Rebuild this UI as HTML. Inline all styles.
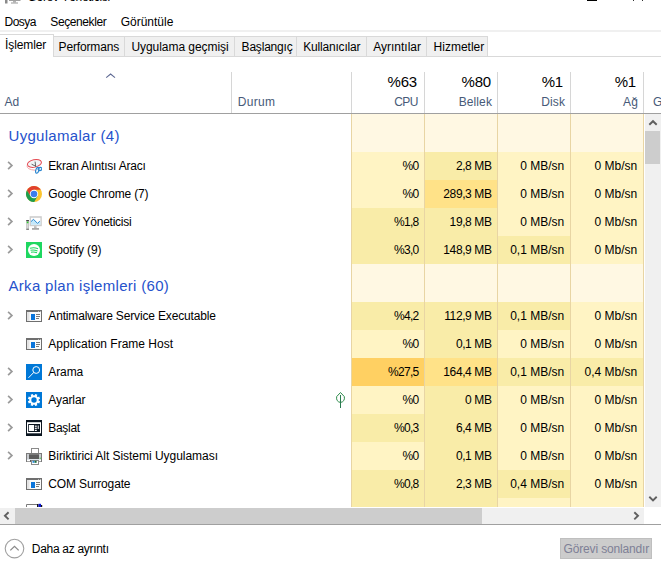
<!DOCTYPE html>
<html><head><meta charset="utf-8"><style>
html,body{margin:0;padding:0;}
body{width:661px;height:561px;overflow:hidden;background:#fff;position:relative;font-family:"Liberation Sans", sans-serif;}
.t{position:absolute;white-space:nowrap;}
.r{position:absolute;display:block;}
</style></head><body>
<svg class="r" style="left:4px;top:0px" width="17" height="5" viewBox="0 0 17 5"><rect x="1" y="0" width="2.5" height="3.5" fill="#8a8a8a"/><rect x="5" y="0" width="11.5" height="1" fill="#a0a0a0"/><rect x="9" y="1" width="3" height="1.5" fill="#b4b4b4"/><rect x="7" y="2.5" width="7" height="1" fill="#9a9a9a"/></svg>
<div class="t" style="left:27.5px;top:-9.36px;font-size:12px;line-height:12px;color:#000;letter-spacing:-0.3px;">Görev Yöneticisi</div>
<div class="r" style="left:587px;top:0px;width:10px;height:1px;background:#000;"></div>
<div class="r" style="left:633px;top:0px;width:1px;height:1px;background:#333;"></div>
<div class="r" style="left:642px;top:0px;width:1px;height:1px;background:#333;"></div>
<div class="t" style="left:4.5px;top:15.84px;font-size:12px;line-height:12px;color:#000;letter-spacing:-0.5px;">Dosya</div>
<div class="t" style="left:50.3px;top:15.84px;font-size:12px;line-height:12px;color:#000;letter-spacing:-0.4px;">Seçenekler</div>
<div class="t" style="left:120.7px;top:15.84px;font-size:12px;line-height:12px;color:#000;letter-spacing:0px;">Görüntüle</div>
<div class="r" style="left:0px;top:30px;width:661px;height:2px;background:#f0f0f0;"></div>
<div class="r" style="left:0px;top:56px;width:661px;height:1px;background:#d9d9d9;"></div>
<div class="r" style="left:53px;top:36px;width:72px;height:21px;background:#d9d9d9;"></div>
<div class="r" style="left:54px;top:37px;width:70px;height:19px;background:#f0f0f0;"></div>
<div class="t" style="left:58.6px;top:40.84px;font-size:12px;line-height:12px;color:#000;letter-spacing:-0.15px;">Performans</div>
<div class="r" style="left:124px;top:36px;width:111px;height:21px;background:#d9d9d9;"></div>
<div class="r" style="left:125px;top:37px;width:109px;height:19px;background:#f0f0f0;"></div>
<div class="t" style="left:131.4px;top:40.84px;font-size:12px;line-height:12px;color:#000;letter-spacing:-0.05px;">Uygulama geçmişi</div>
<div class="r" style="left:234px;top:36px;width:63px;height:21px;background:#d9d9d9;"></div>
<div class="r" style="left:235px;top:37px;width:61px;height:19px;background:#f0f0f0;"></div>
<div class="t" style="left:241.6px;top:40.84px;font-size:12px;line-height:12px;color:#000;letter-spacing:-0.2px;">Başlangıç</div>
<div class="r" style="left:296px;top:36px;width:71px;height:21px;background:#d9d9d9;"></div>
<div class="r" style="left:297px;top:37px;width:69px;height:19px;background:#f0f0f0;"></div>
<div class="t" style="left:303.3px;top:40.84px;font-size:12px;line-height:12px;color:#000;letter-spacing:-0.2px;">Kullanıcılar</div>
<div class="r" style="left:366px;top:36px;width:61px;height:21px;background:#d9d9d9;"></div>
<div class="r" style="left:367px;top:37px;width:59px;height:19px;background:#f0f0f0;"></div>
<div class="t" style="left:373.2px;top:40.84px;font-size:12px;line-height:12px;color:#000;letter-spacing:0px;">Ayrıntılar</div>
<div class="r" style="left:426px;top:36px;width:62px;height:21px;background:#d9d9d9;"></div>
<div class="r" style="left:427px;top:37px;width:60px;height:19px;background:#f0f0f0;"></div>
<div class="t" style="left:433.6px;top:40.84px;font-size:12px;line-height:12px;color:#000;letter-spacing:0px;">Hizmetler</div>
<div class="r" style="left:0px;top:34px;width:54px;height:23px;background:#d9d9d9;"></div>
<div class="r" style="left:0px;top:35px;width:53px;height:22px;background:#fff;"></div>
<div class="t" style="left:5px;top:38.84px;font-size:12px;line-height:12px;color:#000;letter-spacing:-0.1px;">İşlemler</div>
<div class="r" style="left:231px;top:72px;width:1px;height:41px;background:#d6d6d6;"></div>
<div class="r" style="left:351px;top:72px;width:1px;height:41px;background:#d6d6d6;"></div>
<div class="r" style="left:424px;top:72px;width:1px;height:41px;background:#d6d6d6;"></div>
<div class="r" style="left:497px;top:72px;width:1px;height:41px;background:#d6d6d6;"></div>
<div class="r" style="left:570px;top:72px;width:1px;height:41px;background:#d6d6d6;"></div>
<div class="r" style="left:643px;top:72px;width:1px;height:41px;background:#d6d6d6;"></div>
<div class="r" style="left:0px;top:113px;width:661px;height:1px;background:#a0a0a0;"></div>
<svg class="r" style="left:105px;top:72px" width="11" height="7" viewBox="0 0 11 7"><path d="M1.2 5.6 L5.6 2.1 L10 5.6" fill="none" stroke="#5f6a94" stroke-width="1.15"/></svg>
<div class="t" style="left:4.4px;top:95.54px;font-size:12px;line-height:12px;color:#475a78;letter-spacing:0px;">Ad</div>
<div class="t" style="left:237.8px;top:95.54px;font-size:12px;line-height:12px;color:#475a78;letter-spacing:0.3px;">Durum</div>
<div class="t" style="right:244px;text-align:right;top:73.60px;font-size:15px;line-height:15px;color:#000;letter-spacing:-0.2px;">%63</div>
<div class="t" style="right:243px;text-align:right;top:95.54px;font-size:12px;line-height:12px;color:#475a78;letter-spacing:-0.5px;">CPU</div>
<div class="t" style="right:170px;text-align:right;top:73.60px;font-size:15px;line-height:15px;color:#000;letter-spacing:-0.2px;">%80</div>
<div class="t" style="right:169px;text-align:right;top:95.54px;font-size:12px;line-height:12px;color:#475a78;letter-spacing:0.1px;">Bellek</div>
<div class="t" style="right:98px;text-align:right;top:73.60px;font-size:15px;line-height:15px;color:#000;letter-spacing:-0.2px;">%1</div>
<div class="t" style="right:96px;text-align:right;top:95.54px;font-size:12px;line-height:12px;color:#475a78;letter-spacing:0.1px;">Disk</div>
<div class="t" style="right:25px;text-align:right;top:73.60px;font-size:15px;line-height:15px;color:#000;letter-spacing:-0.2px;">%1</div>
<div class="t" style="right:23px;text-align:right;top:95.54px;font-size:12px;line-height:12px;color:#475a78;letter-spacing:0.1px;">Ağ</div>
<div class="t" style="left:653px;top:95.54px;font-size:12px;line-height:12px;color:#475a78;letter-spacing:0px;">G</div>
<div class="r" style="left:352px;top:114px;width:72px;height:38px;background:#fff8e3;"></div>
<div class="r" style="left:425px;top:114px;width:72px;height:38px;background:#fff8e3;"></div>
<div class="r" style="left:498px;top:114px;width:72px;height:38px;background:#fff8e3;"></div>
<div class="r" style="left:571px;top:114px;width:72px;height:38px;background:#fff8e3;"></div>
<div class="t" style="left:8.5px;top:128.30px;font-size:15px;line-height:15px;color:#2652cc;letter-spacing:0.3px;">Uygulamalar (4)</div>
<div class="r" style="left:352px;top:152px;width:72px;height:28px;background:#fff4c4;"></div>
<div class="r" style="left:425px;top:152px;width:72px;height:28px;background:#f9eca8;"></div>
<div class="r" style="left:498px;top:152px;width:72px;height:28px;background:#fff4c4;"></div>
<div class="r" style="left:571px;top:152px;width:72px;height:28px;background:#fff4c4;"></div>
<svg class="r" style="left:7px;top:161px" width="7" height="10" viewBox="0 0 7 10"><path d="M1.1 0.8 L4.9 4.4 L1.1 8.1" fill="none" stroke="#9a9a9a" stroke-width="1.7"/></svg>
<svg class="r" style="left:26px;top:158px" width="16" height="16" viewBox="0 0 16 16"><ellipse cx="8.4" cy="5.4" rx="7.1" ry="3.8" transform="rotate(-12 8.4 5.4)" fill="#f1f4f6" stroke="#e64a52" stroke-width="1"/><path d="M1 7.6 Q0.6 11.6 9.6 12.3" fill="none" stroke="#f3a9ac" stroke-width="1"/><path d="M5.6 6.2 L10 8.4 M9.1 3.6 L9.7 8.6" stroke="#555" stroke-width="0.9" fill="none"/><ellipse cx="11.3" cy="12.3" rx="1.5" ry="3" transform="rotate(15 11.3 12.3)" fill="none" stroke="#2a86d0" stroke-width="1.2"/><ellipse cx="14" cy="11" rx="1.9" ry="1.5" transform="rotate(-20 14 11)" fill="none" stroke="#2a86d0" stroke-width="1.2"/></svg>
<div class="t" style="left:48.3px;top:160.34px;font-size:12px;line-height:12px;color:#000;letter-spacing:-0.2px;">Ekran Alıntısı Aracı</div>
<div class="t" style="right:242.5px;text-align:right;top:160.34px;font-size:12px;line-height:12px;color:#000;letter-spacing:-0.7px;">%0</div>
<div class="t" style="right:169.5px;text-align:right;top:160.34px;font-size:12px;line-height:12px;color:#000;letter-spacing:-0.4px;">2,8 MB</div>
<div class="t" style="right:96.79999999999995px;text-align:right;top:160.34px;font-size:12px;line-height:12px;color:#000;letter-spacing:0px;">0 MB/sn</div>
<div class="t" style="right:23.799999999999955px;text-align:right;top:160.34px;font-size:12px;line-height:12px;color:#000;letter-spacing:0px;">0 Mb/sn</div>
<div class="r" style="left:352px;top:180px;width:72px;height:28px;background:#fff4c4;"></div>
<div class="r" style="left:425px;top:180px;width:72px;height:28px;background:#ffe288;"></div>
<div class="r" style="left:498px;top:180px;width:72px;height:28px;background:#fff4c4;"></div>
<div class="r" style="left:571px;top:180px;width:72px;height:28px;background:#fff4c4;"></div>
<svg class="r" style="left:7px;top:189px" width="7" height="10" viewBox="0 0 7 10"><path d="M1.1 0.8 L4.9 4.4 L1.1 8.1" fill="none" stroke="#9a9a9a" stroke-width="1.7"/></svg>
<svg class="r" style="left:26px;top:186px" width="16" height="16" viewBox="0 0 16 16"><circle cx="8" cy="8" r="8" fill="#fcc52f"/><path d="M14.8 3.8 A8 8 0 0 0 0.96 4.2 L4.36 10.1 L8 3.8 Z" fill="#e0402f"/><path d="M0.96 4.2 A8 8 0 0 0 8.24 16 L11.64 10.1 L4.36 10.1 Z" fill="#1f9d4e"/><circle cx="8" cy="8" r="4.2" fill="#fff"/><circle cx="8" cy="8" r="3.3" fill="#3b7ded"/></svg>
<div class="t" style="left:48.3px;top:188.34px;font-size:12px;line-height:12px;color:#000;letter-spacing:-0.15px;">Google Chrome (7)</div>
<div class="t" style="right:242.5px;text-align:right;top:188.34px;font-size:12px;line-height:12px;color:#000;letter-spacing:-0.7px;">%0</div>
<div class="t" style="right:169.5px;text-align:right;top:188.34px;font-size:12px;line-height:12px;color:#000;letter-spacing:-0.4px;">289,3 MB</div>
<div class="t" style="right:96.79999999999995px;text-align:right;top:188.34px;font-size:12px;line-height:12px;color:#000;letter-spacing:0px;">0 MB/sn</div>
<div class="t" style="right:23.799999999999955px;text-align:right;top:188.34px;font-size:12px;line-height:12px;color:#000;letter-spacing:0px;">0 Mb/sn</div>
<div class="r" style="left:352px;top:208px;width:72px;height:28px;background:#f9eca8;"></div>
<div class="r" style="left:425px;top:208px;width:72px;height:28px;background:#f9eca8;"></div>
<div class="r" style="left:498px;top:208px;width:72px;height:28px;background:#fff4c4;"></div>
<div class="r" style="left:571px;top:208px;width:72px;height:28px;background:#fff4c4;"></div>
<svg class="r" style="left:7px;top:217px" width="7" height="10" viewBox="0 0 7 10"><path d="M1.1 0.8 L4.9 4.4 L1.1 8.1" fill="none" stroke="#9a9a9a" stroke-width="1.7"/></svg>
<svg class="r" style="left:26px;top:212px" width="16" height="18" viewBox="0 0 16 18"><rect x="0.3" y="8" width="2.6" height="9.8" fill="#b4b4b4"/><rect x="0.8" y="9.5" width="1.6" height="7" fill="#d8d8d8"/><rect x="0.3" y="8" width="2.6" height="1.2" fill="#444"/><circle cx="1.6" cy="10.4" r="0.9" fill="#30d030"/><rect x="0.3" y="16.8" width="2.6" height="1" fill="#777"/><rect x="3.6" y="4.2" width="12.2" height="10" fill="#cdcdcd"/><rect x="5" y="5.8" width="9.4" height="7" fill="#fff"/><path d="M5 9.6 L7.5 7.3 L11.5 11.4 L14.4 9 L14.4 12.8 L5 12.8 Z" fill="#c4e8fa"/><path d="M5 9.6 L7.5 7.3 L11.5 11.4 L13.8 9.2" fill="none" stroke="#2a88d0" stroke-width="1"/><rect x="8" y="14.2" width="2.6" height="1.8" fill="#bdbdbd"/><rect x="6" y="16" width="7" height="1.8" fill="#a8a8a8"/></svg>
<div class="t" style="left:48.3px;top:216.34px;font-size:12px;line-height:12px;color:#000;letter-spacing:-0.25px;">Görev Yöneticisi</div>
<div class="t" style="right:242.5px;text-align:right;top:216.34px;font-size:12px;line-height:12px;color:#000;letter-spacing:-0.7px;">%1,8</div>
<div class="t" style="right:169.5px;text-align:right;top:216.34px;font-size:12px;line-height:12px;color:#000;letter-spacing:-0.4px;">19,8 MB</div>
<div class="t" style="right:96.79999999999995px;text-align:right;top:216.34px;font-size:12px;line-height:12px;color:#000;letter-spacing:0px;">0 MB/sn</div>
<div class="t" style="right:23.799999999999955px;text-align:right;top:216.34px;font-size:12px;line-height:12px;color:#000;letter-spacing:0px;">0 Mb/sn</div>
<div class="r" style="left:352px;top:236px;width:72px;height:28px;background:#f9eca8;"></div>
<div class="r" style="left:425px;top:236px;width:72px;height:28px;background:#f9eca8;"></div>
<div class="r" style="left:498px;top:236px;width:72px;height:28px;background:#f9eca8;"></div>
<div class="r" style="left:571px;top:236px;width:72px;height:28px;background:#fff4c4;"></div>
<svg class="r" style="left:7px;top:245px" width="7" height="10" viewBox="0 0 7 10"><path d="M1.1 0.8 L4.9 4.4 L1.1 8.1" fill="none" stroke="#9a9a9a" stroke-width="1.7"/></svg>
<svg class="r" style="left:26px;top:242px" width="16" height="16" viewBox="0 0 16 16"><rect x="0" y="0" width="16" height="16" fill="#1ed760"/><circle cx="8" cy="8" r="6" fill="#fff"/><path d="M4 6.3 Q8 5 12 6.8 M4.5 8.3 Q8 7.3 11.5 9 M5 10.2 Q8 9.5 11 10.8" fill="none" stroke="#1ed760" stroke-width="1.1"/></svg>
<div class="t" style="left:48.3px;top:244.34px;font-size:12px;line-height:12px;color:#000;letter-spacing:-0.15px;">Spotify (9)</div>
<div class="t" style="right:242.5px;text-align:right;top:244.34px;font-size:12px;line-height:12px;color:#000;letter-spacing:-0.7px;">%3,0</div>
<div class="t" style="right:169.5px;text-align:right;top:244.34px;font-size:12px;line-height:12px;color:#000;letter-spacing:-0.4px;">148,9 MB</div>
<div class="t" style="right:96.79999999999995px;text-align:right;top:244.34px;font-size:12px;line-height:12px;color:#000;letter-spacing:0px;">0,1 MB/sn</div>
<div class="t" style="right:23.799999999999955px;text-align:right;top:244.34px;font-size:12px;line-height:12px;color:#000;letter-spacing:0px;">0 Mb/sn</div>
<div class="r" style="left:352px;top:264px;width:72px;height:38px;background:#fff8e3;"></div>
<div class="r" style="left:425px;top:264px;width:72px;height:38px;background:#fff8e3;"></div>
<div class="r" style="left:498px;top:264px;width:72px;height:38px;background:#fff8e3;"></div>
<div class="r" style="left:571px;top:264px;width:72px;height:38px;background:#fff8e3;"></div>
<div class="t" style="left:8.5px;top:278.30px;font-size:15px;line-height:15px;color:#2652cc;letter-spacing:0.3px;">Arka plan işlemleri (60)</div>
<div class="r" style="left:352px;top:302px;width:72px;height:28px;background:#f9eca8;"></div>
<div class="r" style="left:425px;top:302px;width:72px;height:28px;background:#f9eca8;"></div>
<div class="r" style="left:498px;top:302px;width:72px;height:28px;background:#f9eca8;"></div>
<div class="r" style="left:571px;top:302px;width:72px;height:28px;background:#fff4c4;"></div>
<svg class="r" style="left:7px;top:311px" width="7" height="10" viewBox="0 0 7 10"><path d="M1.1 0.8 L4.9 4.4 L1.1 8.1" fill="none" stroke="#9a9a9a" stroke-width="1.7"/></svg>
<svg class="r" style="left:26px;top:310px" width="16" height="12" viewBox="0 0 16 12"><rect x="0" y="0" width="16" height="12" fill="#6f6f6f"/><rect x="1" y="2" width="14" height="9" fill="#fbfbfb"/><rect x="12" y="1" width="1" height="1" fill="#b8b8b8"/><rect x="14" y="1" width="1" height="1" fill="#b8b8b8"/><rect x="1" y="2" width="2.5" height="9" fill="#e3e3e3"/><rect x="5" y="4" width="4" height="6" fill="#0a74da"/><rect x="10" y="4" width="4" height="1" fill="#7a7a7a"/><rect x="10" y="6" width="4" height="1" fill="#7a7a7a"/><rect x="10" y="8" width="3" height="1" fill="#7a7a7a"/></svg>
<div class="t" style="left:48.3px;top:310.34px;font-size:12px;line-height:12px;color:#000;letter-spacing:-0.15px;">Antimalware Service Executable</div>
<div class="t" style="right:242.5px;text-align:right;top:310.34px;font-size:12px;line-height:12px;color:#000;letter-spacing:-0.7px;">%4,2</div>
<div class="t" style="right:169.5px;text-align:right;top:310.34px;font-size:12px;line-height:12px;color:#000;letter-spacing:-0.4px;">112,9 MB</div>
<div class="t" style="right:96.79999999999995px;text-align:right;top:310.34px;font-size:12px;line-height:12px;color:#000;letter-spacing:0px;">0,1 MB/sn</div>
<div class="t" style="right:23.799999999999955px;text-align:right;top:310.34px;font-size:12px;line-height:12px;color:#000;letter-spacing:0px;">0 Mb/sn</div>
<div class="r" style="left:352px;top:330px;width:72px;height:28px;background:#fff4c4;"></div>
<div class="r" style="left:425px;top:330px;width:72px;height:28px;background:#f9eca8;"></div>
<div class="r" style="left:498px;top:330px;width:72px;height:28px;background:#fff4c4;"></div>
<div class="r" style="left:571px;top:330px;width:72px;height:28px;background:#fff4c4;"></div>
<svg class="r" style="left:26px;top:338px" width="16" height="12" viewBox="0 0 16 12"><rect x="0" y="0" width="16" height="12" fill="#6f6f6f"/><rect x="1" y="2" width="14" height="9" fill="#fbfbfb"/><rect x="12" y="1" width="1" height="1" fill="#b8b8b8"/><rect x="14" y="1" width="1" height="1" fill="#b8b8b8"/><rect x="1" y="2" width="2.5" height="9" fill="#e3e3e3"/><rect x="5" y="4" width="4" height="6" fill="#0a74da"/><rect x="10" y="4" width="4" height="1" fill="#7a7a7a"/><rect x="10" y="6" width="4" height="1" fill="#7a7a7a"/><rect x="10" y="8" width="3" height="1" fill="#7a7a7a"/></svg>
<div class="t" style="left:48.3px;top:338.34px;font-size:12px;line-height:12px;color:#000;letter-spacing:0px;">Application Frame Host</div>
<div class="t" style="right:242.5px;text-align:right;top:338.34px;font-size:12px;line-height:12px;color:#000;letter-spacing:-0.7px;">%0</div>
<div class="t" style="right:169.5px;text-align:right;top:338.34px;font-size:12px;line-height:12px;color:#000;letter-spacing:-0.4px;">0,1 MB</div>
<div class="t" style="right:96.79999999999995px;text-align:right;top:338.34px;font-size:12px;line-height:12px;color:#000;letter-spacing:0px;">0 MB/sn</div>
<div class="t" style="right:23.799999999999955px;text-align:right;top:338.34px;font-size:12px;line-height:12px;color:#000;letter-spacing:0px;">0 Mb/sn</div>
<div class="r" style="left:352px;top:358px;width:72px;height:28px;background:#ffd062;"></div>
<div class="r" style="left:425px;top:358px;width:72px;height:28px;background:#ffe288;"></div>
<div class="r" style="left:498px;top:358px;width:72px;height:28px;background:#f9eca8;"></div>
<div class="r" style="left:571px;top:358px;width:72px;height:28px;background:#f9eca8;"></div>
<svg class="r" style="left:7px;top:367px" width="7" height="10" viewBox="0 0 7 10"><path d="M1.1 0.8 L4.9 4.4 L1.1 8.1" fill="none" stroke="#9a9a9a" stroke-width="1.7"/></svg>
<svg class="r" style="left:26px;top:364px" width="16" height="16" viewBox="0 0 16 16"><rect x="0" y="0" width="16" height="16" fill="#0078d7"/><circle cx="10.2" cy="6" r="3.4" fill="none" stroke="#fff" stroke-width="1"/><path d="M7.8 8.4 L2.5 13.8" stroke="#fff" stroke-width="1"/></svg>
<div class="t" style="left:48.3px;top:366.34px;font-size:12px;line-height:12px;color:#000;letter-spacing:-0.1px;">Arama</div>
<div class="t" style="right:242.5px;text-align:right;top:366.34px;font-size:12px;line-height:12px;color:#000;letter-spacing:-0.7px;">%27,5</div>
<div class="t" style="right:169.5px;text-align:right;top:366.34px;font-size:12px;line-height:12px;color:#000;letter-spacing:-0.4px;">164,4 MB</div>
<div class="t" style="right:96.79999999999995px;text-align:right;top:366.34px;font-size:12px;line-height:12px;color:#000;letter-spacing:0px;">0,1 MB/sn</div>
<div class="t" style="right:23.799999999999955px;text-align:right;top:366.34px;font-size:12px;line-height:12px;color:#000;letter-spacing:0px;">0,4 Mb/sn</div>
<div class="r" style="left:352px;top:386px;width:72px;height:28px;background:#fff4c4;"></div>
<div class="r" style="left:425px;top:386px;width:72px;height:28px;background:#f9eca8;"></div>
<div class="r" style="left:498px;top:386px;width:72px;height:28px;background:#fff4c4;"></div>
<div class="r" style="left:571px;top:386px;width:72px;height:28px;background:#fff4c4;"></div>
<svg class="r" style="left:7px;top:395px" width="7" height="10" viewBox="0 0 7 10"><path d="M1.1 0.8 L4.9 4.4 L1.1 8.1" fill="none" stroke="#9a9a9a" stroke-width="1.7"/></svg>
<svg class="r" style="left:26px;top:392px" width="16" height="16" viewBox="0 0 16 16"><rect x="0" y="0" width="16" height="16" fill="#0078d7"/><g transform="translate(8 8)" fill="#fff"><circle r="4.7"/><rect x="-1.2" y="-6.1" width="2.4" height="3" transform="rotate(22.5)"/><rect x="-1.2" y="-6.1" width="2.4" height="3" transform="rotate(67.5)"/><rect x="-1.2" y="-6.1" width="2.4" height="3" transform="rotate(112.5)"/><rect x="-1.2" y="-6.1" width="2.4" height="3" transform="rotate(157.5)"/><rect x="-1.2" y="-6.1" width="2.4" height="3" transform="rotate(202.5)"/><rect x="-1.2" y="-6.1" width="2.4" height="3" transform="rotate(247.5)"/><rect x="-1.2" y="-6.1" width="2.4" height="3" transform="rotate(292.5)"/><rect x="-1.2" y="-6.1" width="2.4" height="3" transform="rotate(337.5)"/></g><circle cx="8" cy="8" r="2.7" fill="#0078d7"/></svg>
<div class="t" style="left:48.3px;top:394.34px;font-size:12px;line-height:12px;color:#000;letter-spacing:-0.1px;">Ayarlar</div>
<div class="t" style="right:242.5px;text-align:right;top:394.34px;font-size:12px;line-height:12px;color:#000;letter-spacing:-0.7px;">%0</div>
<div class="t" style="right:169.5px;text-align:right;top:394.34px;font-size:12px;line-height:12px;color:#000;letter-spacing:-0.4px;">0 MB</div>
<div class="t" style="right:96.79999999999995px;text-align:right;top:394.34px;font-size:12px;line-height:12px;color:#000;letter-spacing:0px;">0 MB/sn</div>
<div class="t" style="right:23.799999999999955px;text-align:right;top:394.34px;font-size:12px;line-height:12px;color:#000;letter-spacing:0px;">0 Mb/sn</div>
<div class="r" style="left:352px;top:414px;width:72px;height:28px;background:#f9eca8;"></div>
<div class="r" style="left:425px;top:414px;width:72px;height:28px;background:#f9eca8;"></div>
<div class="r" style="left:498px;top:414px;width:72px;height:28px;background:#fff4c4;"></div>
<div class="r" style="left:571px;top:414px;width:72px;height:28px;background:#fff4c4;"></div>
<svg class="r" style="left:7px;top:423px" width="7" height="10" viewBox="0 0 7 10"><path d="M1.1 0.8 L4.9 4.4 L1.1 8.1" fill="none" stroke="#9a9a9a" stroke-width="1.7"/></svg>
<svg class="r" style="left:26px;top:420px" width="16" height="16" viewBox="0 0 16 16"><rect x="0" y="0" width="16" height="16" fill="#0b1520"/><rect x="1" y="2.2" width="14" height="11.1" fill="#fff"/><rect x="2.2" y="4" width="11.8" height="8" fill="#0b1520"/><rect x="3" y="5" width="5" height="6" fill="#fff"/><rect x="8.8" y="5.6" width="2" height="1.2" fill="#fff"/><rect x="8.8" y="7.7" width="2" height="1.2" fill="#fff"/><rect x="8.8" y="9.8" width="2" height="1.2" fill="#fff"/><rect x="11.7" y="5.5" width="1" height="3.5" fill="#fff"/></svg>
<div class="t" style="left:48.3px;top:422.34px;font-size:12px;line-height:12px;color:#000;letter-spacing:-0.3px;">Başlat</div>
<div class="t" style="right:242.5px;text-align:right;top:422.34px;font-size:12px;line-height:12px;color:#000;letter-spacing:-0.7px;">%0,3</div>
<div class="t" style="right:169.5px;text-align:right;top:422.34px;font-size:12px;line-height:12px;color:#000;letter-spacing:-0.4px;">6,4 MB</div>
<div class="t" style="right:96.79999999999995px;text-align:right;top:422.34px;font-size:12px;line-height:12px;color:#000;letter-spacing:0px;">0 MB/sn</div>
<div class="t" style="right:23.799999999999955px;text-align:right;top:422.34px;font-size:12px;line-height:12px;color:#000;letter-spacing:0px;">0 Mb/sn</div>
<div class="r" style="left:352px;top:442px;width:72px;height:28px;background:#fff4c4;"></div>
<div class="r" style="left:425px;top:442px;width:72px;height:28px;background:#f9eca8;"></div>
<div class="r" style="left:498px;top:442px;width:72px;height:28px;background:#fff4c4;"></div>
<div class="r" style="left:571px;top:442px;width:72px;height:28px;background:#fff4c4;"></div>
<svg class="r" style="left:7px;top:451px" width="7" height="10" viewBox="0 0 7 10"><path d="M1.1 0.8 L4.9 4.4 L1.1 8.1" fill="none" stroke="#9a9a9a" stroke-width="1.7"/></svg>
<svg class="r" style="left:26px;top:448px" width="16" height="18" viewBox="0 0 16 18"><rect x="5.5" y="0.5" width="7" height="6" fill="#fff" stroke="#8a8a8a"/><rect x="0.5" y="5.5" width="15" height="8" fill="#c9ccd0" stroke="#7a7a7a"/><rect x="3" y="5" width="10" height="6" fill="#5c5c5c"/><rect x="3" y="5" width="10" height="2" fill="#7a7a7a"/><rect x="1" y="11" width="14" height="1" fill="#dfe5ea"/><rect x="1" y="12" width="14" height="1.3" fill="#fff"/><rect x="4.3" y="12" width="1" height="1.6" fill="#111"/><rect x="12" y="12" width="1" height="1.6" fill="#111"/><rect x="5.5" y="12.5" width="7" height="4" fill="#fff" stroke="#8a8a8a"/><rect x="6.5" y="12.8" width="2" height="2" fill="#2a8ad8"/><rect x="8.6" y="12.8" width="2" height="2" fill="#1a6a3a"/><circle cx="14.3" cy="10.3" r="0.8" fill="#60d060"/></svg>
<div class="t" style="left:48.3px;top:450.34px;font-size:12px;line-height:12px;color:#000;letter-spacing:-0.03px;">Biriktirici Alt Sistemi Uygulaması</div>
<div class="t" style="right:242.5px;text-align:right;top:450.34px;font-size:12px;line-height:12px;color:#000;letter-spacing:-0.7px;">%0</div>
<div class="t" style="right:169.5px;text-align:right;top:450.34px;font-size:12px;line-height:12px;color:#000;letter-spacing:-0.4px;">0,1 MB</div>
<div class="t" style="right:96.79999999999995px;text-align:right;top:450.34px;font-size:12px;line-height:12px;color:#000;letter-spacing:0px;">0 MB/sn</div>
<div class="t" style="right:23.799999999999955px;text-align:right;top:450.34px;font-size:12px;line-height:12px;color:#000;letter-spacing:0px;">0 Mb/sn</div>
<div class="r" style="left:352px;top:470px;width:72px;height:28px;background:#f9eca8;"></div>
<div class="r" style="left:425px;top:470px;width:72px;height:28px;background:#f9eca8;"></div>
<div class="r" style="left:498px;top:470px;width:72px;height:28px;background:#f9eca8;"></div>
<div class="r" style="left:571px;top:470px;width:72px;height:28px;background:#fff4c4;"></div>
<svg class="r" style="left:26px;top:478px" width="16" height="12" viewBox="0 0 16 12"><rect x="0" y="0" width="16" height="12" fill="#6f6f6f"/><rect x="1" y="2" width="14" height="9" fill="#fbfbfb"/><rect x="12" y="1" width="1" height="1" fill="#b8b8b8"/><rect x="14" y="1" width="1" height="1" fill="#b8b8b8"/><rect x="1" y="2" width="2.5" height="9" fill="#e3e3e3"/><rect x="5" y="4" width="4" height="6" fill="#0a74da"/><rect x="10" y="4" width="4" height="1" fill="#7a7a7a"/><rect x="10" y="6" width="4" height="1" fill="#7a7a7a"/><rect x="10" y="8" width="3" height="1" fill="#7a7a7a"/></svg>
<div class="t" style="left:48.3px;top:478.34px;font-size:12px;line-height:12px;color:#000;letter-spacing:-0.15px;">COM Surrogate</div>
<div class="t" style="right:242.5px;text-align:right;top:478.34px;font-size:12px;line-height:12px;color:#000;letter-spacing:-0.7px;">%0,8</div>
<div class="t" style="right:169.5px;text-align:right;top:478.34px;font-size:12px;line-height:12px;color:#000;letter-spacing:-0.4px;">2,3 MB</div>
<div class="t" style="right:96.79999999999995px;text-align:right;top:478.34px;font-size:12px;line-height:12px;color:#000;letter-spacing:0px;">0,4 MB/sn</div>
<div class="t" style="right:23.799999999999955px;text-align:right;top:478.34px;font-size:12px;line-height:12px;color:#000;letter-spacing:0px;">0 Mb/sn</div>
<div class="r" style="left:352px;top:498px;width:72px;height:9px;background:#f9eca8;"></div>
<div class="r" style="left:425px;top:498px;width:72px;height:9px;background:#f9eca8;"></div>
<div class="r" style="left:498px;top:498px;width:72px;height:9px;background:#fff4c4;"></div>
<div class="r" style="left:571px;top:498px;width:72px;height:9px;background:#fff4c4;"></div>
<div class="r" style="left:351px;top:114px;width:1px;height:393px;background:#e8d5a4;"></div>
<div class="r" style="left:424px;top:114px;width:1px;height:393px;background:#e8d5a4;"></div>
<div class="r" style="left:497px;top:114px;width:1px;height:393px;background:#e8d5a4;"></div>
<div class="r" style="left:570px;top:114px;width:1px;height:393px;background:#e8d5a4;"></div>
<div class="r" style="left:643px;top:114px;width:1px;height:393px;background:#e8d5a4;"></div>
<svg class="r" style="left:335px;top:391px" width="11" height="18" viewBox="0 0 11 18"><path d="M5.5 1.5 L9.3 5.6 Q10.2 10.5 5.5 11.5 Q0.8 10.5 1.7 5.6 Z" fill="none" stroke="#2a8a48" stroke-width="1"/><path d="M5.5 4 L5.5 17" stroke="#2a7a50" stroke-width="1"/></svg>
<svg class="r" style="left:26px;top:503px" width="17" height="5" viewBox="0 0 17 5"><path d="M0.5 4 L0.5 1.5 L11 1.5" fill="none" stroke="#7a7a7a" stroke-width="1"/><rect x="11" y="1" width="1.5" height="3" fill="#111"/><rect x="12.5" y="0.8" width="2.5" height="3.2" fill="#0a14d0"/><rect x="15" y="2" width="1.2" height="2" fill="#111"/></svg>
<div class="r" style="left:0px;top:507px;width:661px;height:1px;background:#fff;"></div>
<div class="r" style="left:645px;top:114px;width:16px;height:393px;background:#f0f0f0;"></div>
<svg class="r" style="left:645px;top:114px" width="16" height="16" viewBox="0 0 16 16"><path d="M4.3 10.8 L8 7.2 L11.7 10.8" fill="none" stroke="#606060" stroke-width="1.9"/></svg>
<div class="r" style="left:645px;top:131px;width:15px;height:33px;background:#cdcdcd;"></div>
<svg class="r" style="left:645px;top:491px" width="16" height="16" viewBox="0 0 16 16"><path d="M4.3 5.8 L8 9.4 L11.7 5.8" fill="none" stroke="#606060" stroke-width="1.9"/></svg>
<div class="r" style="left:0px;top:508px;width:644px;height:16px;background:#f0f0f0;"></div>
<div class="r" style="left:15px;top:508px;width:467px;height:16px;background:#cdcdcd;"></div>
<svg class="r" style="left:0px;top:508px" width="15" height="16" viewBox="0 0 15 16"><path d="M8.6 4.2 L4.9 7.8 L8.6 11.4" fill="none" stroke="#606060" stroke-width="1.9"/></svg>
<svg class="r" style="left:629px;top:508px" width="15" height="16" viewBox="0 0 15 16"><path d="M5.3 4.2 L9 7.8 L5.3 11.4" fill="none" stroke="#606060" stroke-width="1.9"/></svg>
<div class="r" style="left:0px;top:524px;width:661px;height:1px;background:#a0a0a0;"></div>
<svg class="r" style="left:4px;top:538px" width="21" height="21" viewBox="0 0 21 21"><circle cx="10.5" cy="10.6" r="9.3" fill="none" stroke="#a0a0a0" stroke-width="1.1"/><path d="M6.3 12.4 L10.5 8.3 L14.7 12.4" fill="none" stroke="#8a8a8a" stroke-width="1.3"/></svg>
<div class="t" style="left:31.8px;top:542.84px;font-size:12px;line-height:12px;color:#000;letter-spacing:-0.3px;">Daha az ayrıntı</div>
<div class="r" style="left:560px;top:538px;width:92px;height:21px;background:#bfbfbf;"></div>
<div class="r" style="left:561px;top:539px;width:90px;height:19px;background:#cccccc;"></div>
<div class="t" style="left:563.5px;top:542.64px;font-size:12px;line-height:12px;color:#7e8096;letter-spacing:-0.15px;">Görevi sonlandır</div>
</body></html>
